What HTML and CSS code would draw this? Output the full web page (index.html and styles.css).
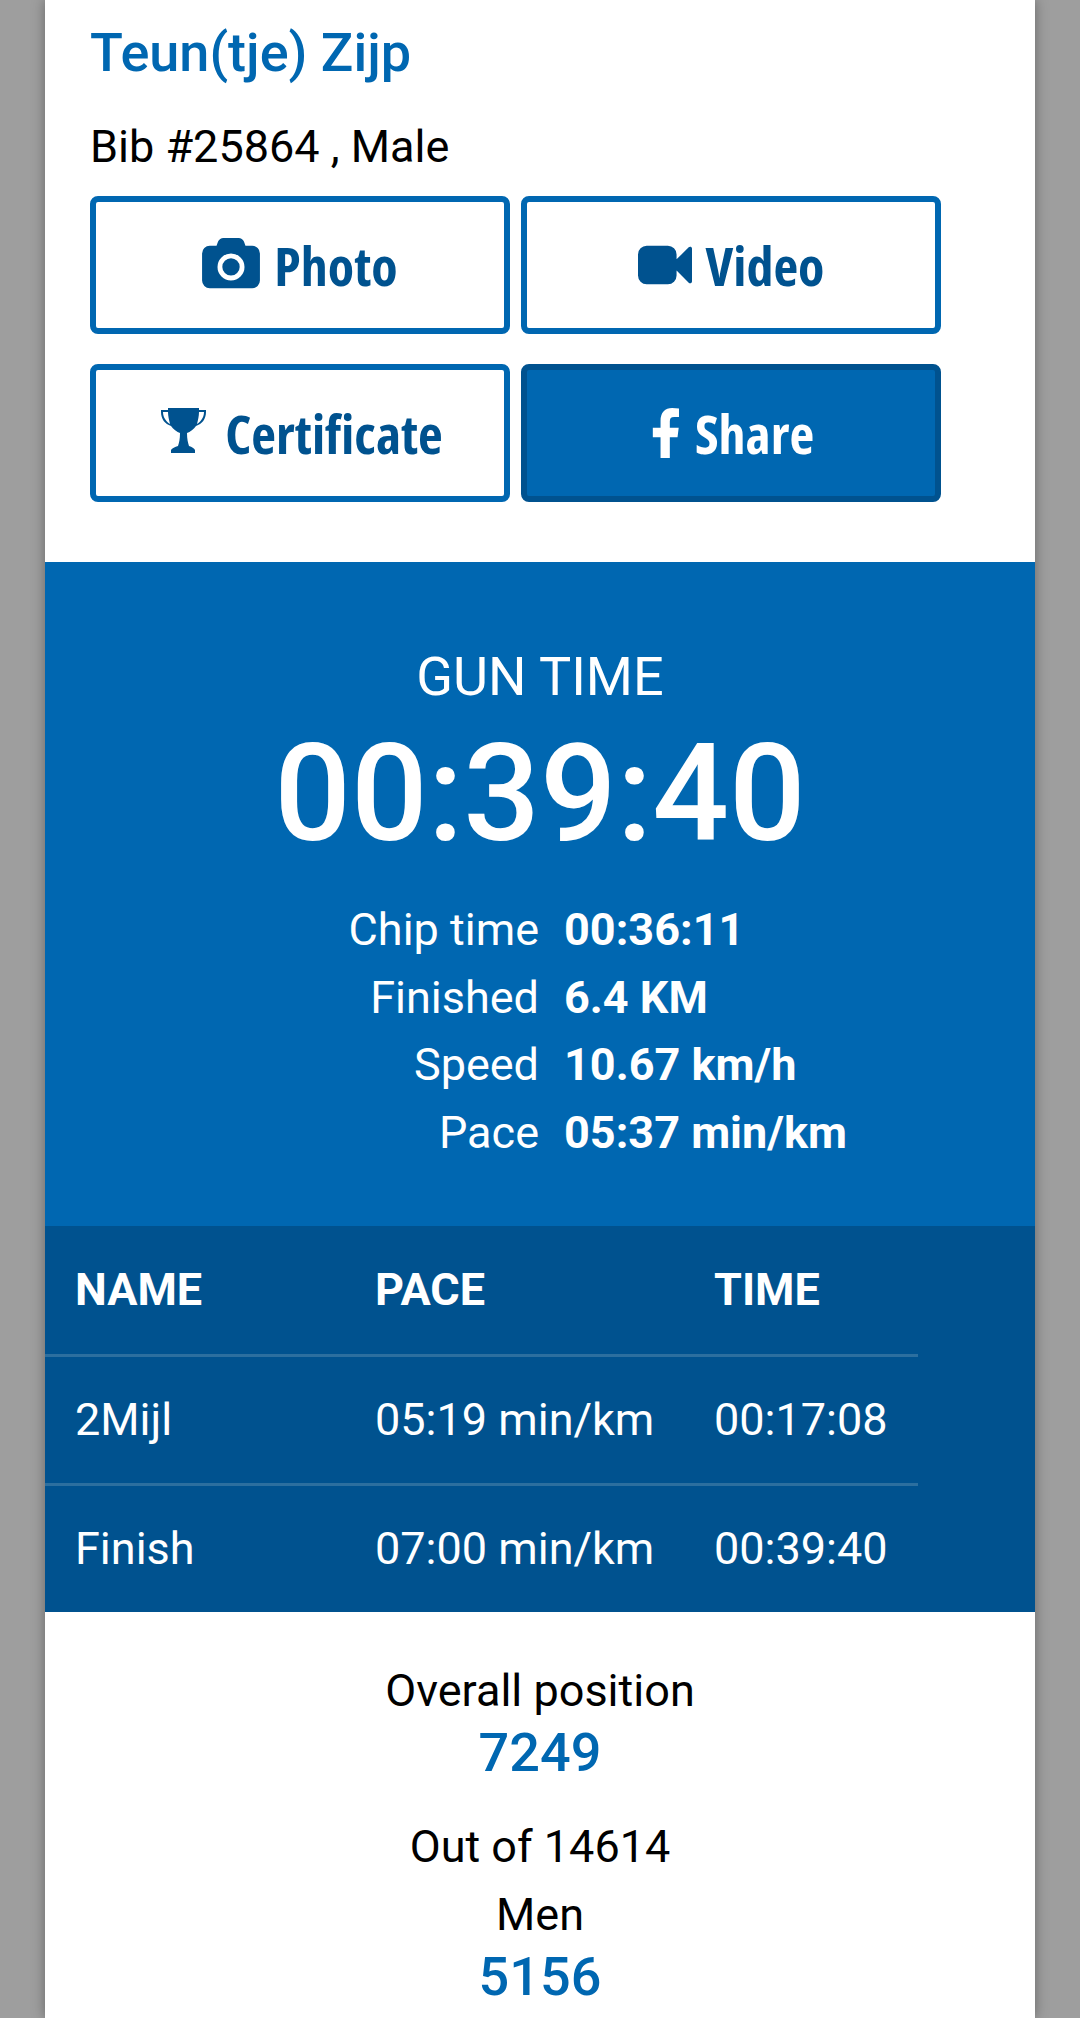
FILE: index.html
```html
<!DOCTYPE html>
<html lang="en">

<head>
    <meta charset="utf-8">
    <title>Teun(tje) Zijp</title>
    <link rel="stylesheet" href="styles.css">
</head>

<body>
    <div id="card">
        <div id="runner">
            <h1>Teun(tje) Zijp</h1>
            <p class="bib">Bib #25864 , Male</p>
            <div class="buttons">
                <a class="btn">
                    <svg class="icon camera" viewBox="0 0 1920 1792"><path d="M960 672q119 0 203.5 84.5t84.5 203.5-84.5 203.5-203.5 84.5-203.5-84.5-84.5-203.5 84.5-203.5 203.5-84.5zm704-416q106 0 181 75t75 181v896q0 106-75 181t-181 75h-1408q-106 0-181-75t-75-181v-896q0-106 75-181t181-75h224l51-136q19-49 69.5-84.5t103.5-35.5h512q53 0 103.5 35.5t69.5 84.5l51 136h224zm-704 1152q185 0 316.5-131.5t131.5-316.5-131.5-316.5-316.5-131.5-316.5 131.5-131.5 316.5 131.5 316.5 316.5 131.5z"/></svg>
                    <span>Photo</span>
                </a>
                <a class="btn">
                    <svg class="icon video" viewBox="0 0 1792 1792"><path d="M1792 352v1088q0 42-39 59-13 5-25 5-27 0-45-19l-403-403v166q0 119-84.5 203.5t-203.5 84.5h-704q-119 0-203.5-84.5t-84.5-203.5v-704q0-119 84.5-203.5t203.5-84.5h704q119 0 203.5 84.5t84.5 203.5v165l403-402q18-19 45-19 12 0 25 5 39 17 39 59z"/></svg>
                    <span>Video</span>
                </a>
                <a class="btn">
                    <svg class="icon trophy" viewBox="0 0 45 45"><path fill-rule="evenodd" d="M7 0H38V2H45V4C45 11 41 16 35 18C33 21 29 24 26 25C26 31 27 35 28 38C31 39 33 40 34 42V45H10V42C11 40 14 39 17 38C18 35 19 31 19 25C16 24 12 21 10 18C4 16 0 11 0 4V2H7ZM2 4C2 10 6 14 9 16C8 12 7 8 7 4ZM43 4H38C38 8 37 12 36 16C39 14 43 10 43 4Z"/></svg>
                    <span>Certificate</span>
                </a>
                <a class="btn share">
                    <svg class="icon fb" viewBox="452 0 891 1548" preserveAspectRatio="none"><path d="M1343 12v264h-157q-86 0-116 36t-30 108v189h293l-39 296h-254v759h-306v-759h-255v-296h255v-218q0-186 104-288.5t277-102.5q147 0 228 12z"/></svg>
                    <span>Share</span>
                </a>
            </div>
        </div>

        <div id="time">
            <div class="gun-label">GUN TIME</div>
            <div class="gun-value">00:39:40</div>
            <div class="stats">
                <span>Chip time</span><b>00:36:11</b>
                <span>Finished</span><b>6.4 KM</b>
                <span>Speed</span><b>10.67 km/h</b>
                <span>Pace</span><b>05:37 min/km</b>
            </div>
        </div>

        <div id="splits">
            <table>
                <tr>
                    <th class="col-name">NAME</th>
                    <th class="col-pace">PACE</th>
                    <th class="col-time">TIME</th>
                </tr>
                <tr>
                    <td>2Mijl</td>
                    <td>05:19 min/km</td>
                    <td>00:17:08</td>
                </tr>
                <tr>
                    <td>Finish</td>
                    <td>07:00 min/km</td>
                    <td>00:39:40</td>
                </tr>
            </table>
        </div>

        <div id="positions">
            <div class="pos-label">Overall position</div>
            <div class="pos-value">7249</div>
            <div class="pos-label out-of">Out of 14614</div>
            <div class="pos-label">Men</div>
            <div class="pos-value">5156</div>
        </div>
    </div>
</body>

</html>
```

FILE: styles.css
```css
html, body {
    margin: 0;
    height: 2018px;
    overflow: hidden;
}

body {
    background-color: #9e9e9e;
    color: #000;
    font-family: Roboto, "Liberation Sans", sans-serif;
    font-size: 45px;
}

#card {
    width: 990px;
    height: 2018px;
    margin-left: 45px;
    background-color: #fff;
    box-shadow: 0 0 12px rgba(0, 0, 0, 0.35);
    overflow: hidden;
}

#runner {
    height: 562px;
    box-sizing: border-box;
    padding: 21px 45px 0;
}

h1 {
    margin: 0;
    color: #0067b1;
    font-size: 54px;
    font-weight: 500;
    line-height: 64px;
}

.bib {
    margin: 37px 0 0;
    line-height: 50px;
}

.buttons {
    display: grid;
    grid-template-columns: 420px 420px;
    grid-auto-rows: 138px;
    column-gap: 11px;
    row-gap: 30px;
    margin-top: 24px;
}

.btn {
    display: flex;
    align-items: center;
    justify-content: center;
    gap: 14px;
    box-sizing: border-box;
    border: 6px solid #0067b1;
    border-radius: 8px;
    color: #00528f;
    font-family: "Open Sans", sans-serif;
    font-stretch: 75%;
    font-size: 54px;
    font-weight: 700;
}

.btn.share {
    background-color: #0067b1;
    border-color: #00528f;
    color: #fff;
}

.icon {
    fill: currentColor;
    flex: none;
}

.camera { width: 58px; height: 54px; }
.video { width: 54px; height: 54px; }
.trophy { width: 45px; height: 45px; margin: -6px 5px 0 4px; }
.fb { width: 27px; height: 50px; margin: 0 2px 0 4px; }

#time {
    height: 664px;
    box-sizing: border-box;
    padding-top: 84px;
    background-color: #0067b1;
    color: #fff;
    text-align: center;
}

.gun-label {
    font-size: 54px;
    line-height: 62px;
}

.gun-value {
    margin-top: 11px;
    font-size: 135px;
    font-weight: 500;
    line-height: 150px;
}

.stats {
    display: grid;
    grid-template-columns: 494px auto;
    column-gap: 25px;
    margin-top: 27px;
    line-height: 67.6px;
    text-align: left;
}

.stats span {
    text-align: right;
}

.stats b {
    font-weight: 700;
}

#splits {
    background-color: #00528f;
    color: #fff;
}

table {
    width: 873px;
    border-collapse: collapse;
    table-layout: fixed;
}

th, td {
    height: 124px;
    padding: 0 0 2px 30px;
    text-align: left;
}

th {
    height: 126px;
}

td {
    border-top: 3px solid #2c6f9f;
    font-weight: 400;
}

.col-name { width: 270px; }
.col-pace { width: 309px; }

#positions {
    padding-top: 50px;
    text-align: center;
}

.pos-label {
    line-height: 58px;
}

.pos-value {
    color: #0067b1;
    font-size: 54px;
    font-weight: 500;
    line-height: 66px;
}

.out-of {
    margin-top: 22px;
    line-height: 78px;
}
```
